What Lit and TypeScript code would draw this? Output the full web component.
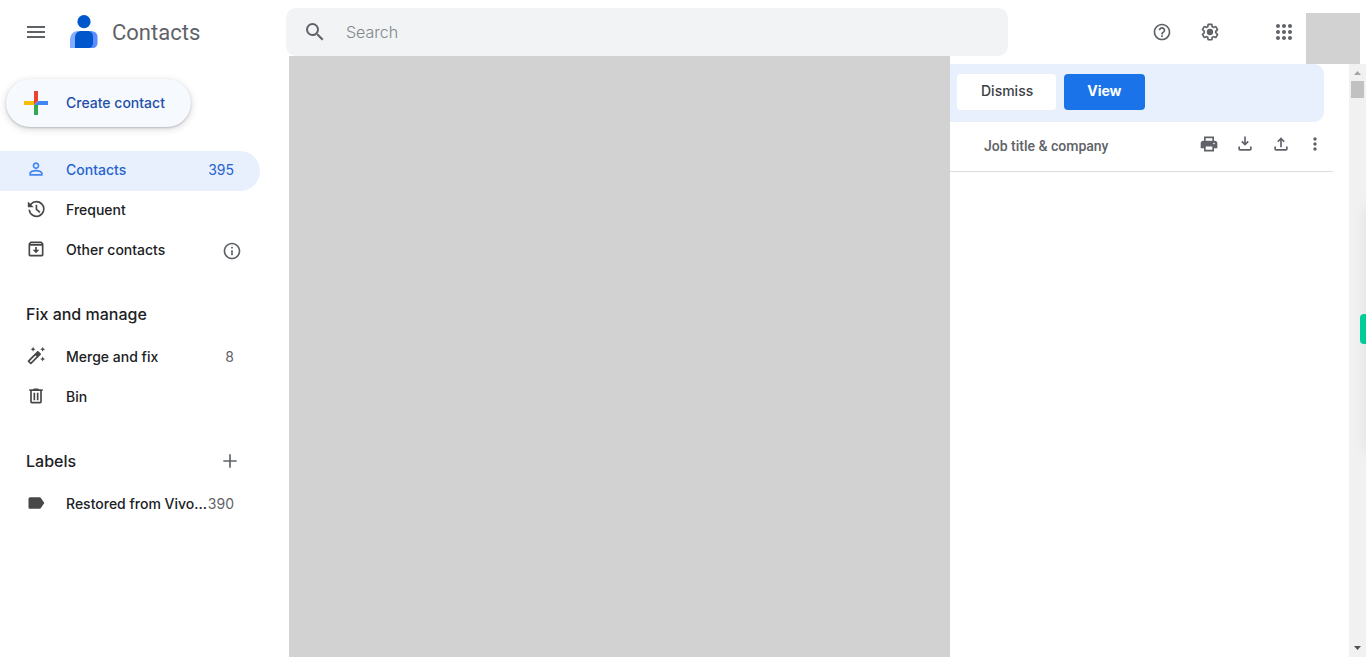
import { LitElement, html, css, svg } from "lit";
import { customElement, property } from "lit/decorators.js";
import { classMap } from "lit/directives/class-map.js";

const glyphs: Record<string, string> = {
  menu: "M3 18h18v-2H3v2zm0-5h18v-2H3v2zm0-7v2h18V6H3z",
  search:
    "M15.5 14h-.79l-.28-.27A6.47 6.47 0 0 0 16 9.5 6.5 6.5 0 1 0 9.5 16c1.61 0 3.09-.59 4.23-1.57l.27.28v.79l5 4.99L20.49 19l-4.99-5zm-6 0C7.01 14 5 11.99 5 9.5S7.01 5 9.5 5 14 7.01 14 9.5 11.99 14 9.5 14z",
  help: "M11 18h2v-2h-2v2zm1-16C6.48 2 2 6.48 2 12s4.48 10 10 10 10-4.48 10-10S17.52 2 12 2zm0 18c-4.41 0-8-3.59-8-8s3.59-8 8-8 8 3.59 8 8-3.59 8-8 8zm0-14c-2.21 0-4 1.79-4 4h2c0-1.1.9-2 2-2s2 .9 2 2c0 2-3 1.75-3 5h2c0-2.25 3-2.5 3-5 0-2.21-1.79-4-4-4z",
  apps: "M6 8c1.1 0 2-.9 2-2s-.9-2-2-2-2 .9-2 2 .9 2 2 2zm6 12c1.1 0 2-.9 2-2s-.9-2-2-2-2 .9-2 2 .9 2 2 2zm-6 0c1.1 0 2-.9 2-2s-.9-2-2-2-2 .9-2 2 .9 2 2 2zm0-6c1.1 0 2-.9 2-2s-.9-2-2-2-2 .9-2 2 .9 2 2 2zm6 0c1.1 0 2-.9 2-2s-.9-2-2-2-2 .9-2 2 .9 2 2 2zm4-8c0 1.1.9 2 2 2s2-.9 2-2-.9-2-2-2-2 .9-2 2zm-4 2c1.1 0 2-.9 2-2s-.9-2-2-2-2 .9-2 2 .9 2 2 2zm6 6c1.1 0 2-.9 2-2s-.9-2-2-2-2 .9-2 2 .9 2 2 2zm0 6c1.1 0 2-.9 2-2s-.9-2-2-2-2 .9-2 2 .9 2 2 2z",
  gear: "M13.85 22.25h-3.7c-.74 0-1.36-.54-1.45-1.27l-.27-1.89c-.27-.14-.53-.29-.79-.46l-1.8.72c-.7.26-1.47-.03-1.81-.65L2.2 15.53c-.35-.66-.2-1.44.36-1.88l1.53-1.19c-.01-.15-.02-.3-.02-.46 0-.15.01-.31.02-.46l-1.52-1.19c-.59-.45-.74-1.26-.37-1.88l1.85-3.19c.34-.62 1.11-.9 1.79-.63l1.81.73c.26-.17.52-.32.78-.46l.27-1.91c.09-.7.71-1.25 1.44-1.25h3.7c.74 0 1.36.54 1.45 1.27l.27 1.89c.27.14.53.29.79.46l1.8-.72c.71-.26 1.48.03 1.82.65l1.84 3.18c.36.66.2 1.44-.36 1.88l-1.52 1.19c.01.15.02.3.02.46s-.01.31-.02.46l1.52 1.19c.56.45.72 1.23.37 1.86l-1.86 3.22c-.34.62-1.11.9-1.8.63l-1.8-.72c-.26.17-.52.32-.78.46l-.27 1.91c-.1.68-.72 1.22-1.46 1.22zm-3.23-2h2.76l.37-2.55.53-.22c.44-.18.88-.44 1.34-.78l.45-.34 2.38.96 1.38-2.4-2.03-1.58.07-.56c.03-.26.06-.51.06-.78s-.03-.53-.06-.78l-.07-.56 2.03-1.58-1.39-2.4-2.39.96-.45-.35c-.42-.32-.87-.58-1.33-.77l-.52-.22-.37-2.55h-2.76l-.37 2.55-.53.21c-.44.19-.88.44-1.34.79l-.45.33-2.38-.95-1.39 2.39 2.03 1.58-.07.56a7 7 0 0 0-.06.79c0 .26.02.53.06.78l.07.56-2.03 1.58 1.38 2.4 2.39-.96.45.35c.43.33.86.58 1.33.77l.53.22.38 2.55zM12 8.2a3.8 3.8 0 1 0 0 7.6 3.8 3.8 0 0 0 0-7.6z",
  person:
    "M12 6c1.1 0 2 .9 2 2s-.9 2-2 2-2-.9-2-2 .9-2 2-2m0 9c2.7 0 5.8 1.29 6 2v1H6v-.99c.2-.72 3.3-2.01 6-2.01m0-11C9.79 4 8 5.79 8 8s1.79 4 4 4 4-1.79 4-4-1.79-4-4-4zm0 9c-2.67 0-8 1.34-8 4v3h16v-3c0-2.66-5.33-4-8-4z",
  history:
    "M12.5 2.2A9.8 9.8 0 0 0 5 5.7L2.2 2.9V10h7.1L6.4 7.1a7.8 7.8 0 1 1-1.6 5.9h-2a9.8 9.8 0 1 0 9.7-10.8zM11.5 7v6l4.6 3.9 1.3-1.5-3.9-3.3V7z",
  archive:
    "M20.54 5.23l-1.39-1.68C18.88 3.21 18.47 3 18 3H6c-.47 0-.88.21-1.16.55L3.46 5.23C3.17 5.57 3 6.02 3 6.5V19c0 1.1.9 2 2 2h14c1.1 0 2-.9 2-2V6.5c0-.48-.17-.93-.46-1.27zM6.24 5h11.52l.83 1H5.42l.82-1zM5 19V8h14v11H5zm6-9.5V13H8l4 4 4-4h-3V9.500z",
  info: "M11 7h2v2h-2zm0 4h2v6h-2zm1-9C6.480 2 2 6.480 2 12s4.480 10 10 10 10-4.480 10-10S17.520 2 12 2zm0 18c-4.410 0-8-3.590-8-8s3.590-8 8-8 8 3.590 8 8-3.590 8-8 8z",
  wand: "M20 7l.94-2.060L23 4l-2.060-.940L20 1l-.940 2.060L17 4l2.060.940zM8.500 7l.940-2.060L11.500 4l-2.060-.940L8.500 1l-.940 2.060L5.500 4l2.060.940zM20 12.500l-.940 2.060-2.060.940 2.060.940.940 2.060.940-2.060L23 15.500l-2.060-.940zM17.710 9.120l-2.830-2.830C14.680 6.100 14.430 6 14.170 6c-.260 0-.510.100-.710.290L2.290 17.460a1 1 0 0 0 0 1.410l2.830 2.830c.200.200.450.300.710.300s.510-.100.710-.290l11.170-11.170c.390-.390.390-1.030 0-1.420zM5.830 19.590l-1.410-1.410 6.870-6.870 1.410 1.410-6.870 6.870z",
  bin: "M15 4V3H9v1H4v2h1v13c0 1.100.9 2 2 2h10c1.100 0 2-.9 2-2V6h1V4h-5zm2 15H7V6h10v13zM9 8h2v9H9zm4 0h2v9h-2z",
  plus: "M20 13h-7v7h-2v-7H4v-2h7V4h2v7h7v2z",
  label:
    "M17.630 5.840C17.270 5.330 16.670 5 16 5L5 5.010C3.900 5.010 3 5.900 3 7v10c0 1.100.9 1.990 2 1.990L16 19c.670 0 1.270-.330 1.630-.840L22 12l-4.370-6.160z",
  print:
    "M19 8h-1V3H6v5H5c-1.660 0-3 1.340-3 3v6h4v4h12v-4h4v-6c0-1.660-1.340-3-3-3zM8 5h8v3H8V5zm8 14H8v-4h8v4zm2-6.500c-.550 0-1-.450-1-1s.450-1 1-1 1 .450 1 1-.450 1-1 1z",
  download:
    "M16.590 9.590L15.170 8.170 13 10.340V3h-2v7.340L8.830 8.170 7.410 9.590 12 14.170zM4 15v3c0 1.100.9 2 2 2h12c1.100 0 2-.9 2-2v-3h-2v3H6v-3z",
  upload:
    "M7.410 8.590L8.830 10 11 7.830V16h2V7.830L15.170 10l1.420-1.410L12 4zM4 15v3c0 1.100.9 2 2 2h12c1.100 0 2-.9 2-2v-3h-2v3H6v-3z",
  more: "M12 8c1.100 0 2-.9 2-2s-.9-2-2-2-2 .9-2 2 .9 2 2 2zm0 2c-1.100 0-2 .9-2 2s.9 2 2 2 2-.9 2-2-.9-2-2-2zm0 6c-1.100 0-2 .9-2 2s.9 2 2 2 2-.9 2-2-.9-2-2-2z",
};

@customElement("c-icon")
class CIcon extends LitElement {
  @property() name = "menu";
  static styles = css`
    :host { display: block; width: 20px; height: 20px; flex: none; }
    :host([large]) { width: 24px; height: 24px; }
    .glyph { display: block; width: 100%; height: 100%; fill: currentColor; }
  `;
  render() {
    return html`<svg class="glyph" viewBox="0 0 24 24" aria-hidden="true">
      ${svg`<path d=${glyphs[this.name]}></path>`}
    </svg>`;
  }
}

interface NavItem {
  icon: string;
  text: string;
  count?: number;
  active?: boolean;
  info?: boolean;
}

const main: NavItem[] = [
  { icon: "person", text: "Contacts", count: 395, active: true },
  { icon: "history", text: "Frequent" },
  { icon: "archive", text: "Other contacts", info: true },
];
const manage: NavItem[] = [
  { icon: "wand", text: "Merge and fix", count: 8 },
  { icon: "bin", text: "Bin" },
];
const labels: NavItem[] = [{ icon: "label", text: "Restored from Vivo...", count: 390 }];

@customElement("app-root")
class AppRoot extends LitElement {
  static styles = css`
    :host {
      display: flex;
      flex-direction: column;
      position: relative;
      height: 100vh;
      overflow: hidden;
      background: #fff;
      color: #202124;
      font: 500 14px/20px Inter, Roboto, sans-serif;
    }
    * { box-sizing: border-box; }
    button { font: inherit; border: 0; margin: 0; padding: 0; background: none; color: inherit; cursor: pointer; }
    a { color: inherit; text-decoration: none; }

    .header { display: flex; height: 64px; flex: none; color: #5f6368; }
    .brand { display: flex; align-items: center; width: 286px; flex: none; padding-left: 24px; }
    .logo { display: flex; align-items: center; gap: 12px; margin-left: 20px; font: 400 22px/28px Roboto, sans-serif; }
    .logo span { padding-top: 2px; }
    .mark { display: block; width: 32px; height: 36px; }
    .search {
      display: flex; align-items: center; flex: 0 1 722px; height: 48px; margin-top: 8px;
      padding-left: 17px; gap: 19px; border-radius: 10px; background: #f1f3f4;
    }
    .field { flex: 1; min-width: 0; border: 0; outline: 0; padding: 0; background: none; font: 300 16px/24px Inter, sans-serif; color: #202124; }
    .field::placeholder { color: #80868b; opacity: 1; }
    .tools { display: flex; align-items: center; margin-left: auto; }
    .tool { margin-right: 28px; }
    .tool.wide { margin-right: 52px; }
    .tool.last { margin-right: 10px; }
    .avatar { width: 54px; height: 51px; margin: 13px 6px 0 0; align-self: flex-start; background: #d2d2d2; }

    .body { display: flex; flex: 1; min-height: 0; }
    .side { width: 289px; flex: none; padding-top: 15px; }
    .create {
      display: flex; align-items: center; gap: 18px; height: 48px; margin: 0 0 24px 6px; padding: 0 26px 0 18px;
      border-radius: 24px; background: #f6f9fe; color: #1f4fa8;
      box-shadow: 0 1px 2px rgba(60, 64, 67, 0.25), 0 2px 6px 1px rgba(60, 64, 67, 0.16);
    }
    .cross { display: block; width: 24px; height: 24px; }
    .row { display: flex; align-items: center; height: 40px; width: 260px; padding: 0 26px 2px; border-radius: 0 20px 20px 0; }
    .row.active { background: #e8f0fe; color: #2563cf; }
    .row c-icon { margin: 0 20px 2px 0; color: #474747; }
    .row.active c-icon { color: #4285f4; }
    .text { flex: 1; white-space: nowrap; }
    .count { font-weight: 400; color: #5f6368; }
    .active .count { color: inherit; }
    .row .info { margin: 2px -8px 0 0; color: #5f6368; }
    .title { display: flex; align-items: center; justify-content: space-between; height: 67px; margin: 0; padding: 18px 49px 0 26px; font: 500 16px/24px Inter, sans-serif; }
    .title button { color: #5f6368; }

    .cover { flex: 0 1 661px; margin-top: -8px; background: #d2d2d2; }
    .panel { flex: 1 0 399px; }
    .banner { display: flex; gap: 8px; height: 58px; margin-right: 25px; padding: 10px 7px; border-radius: 0 10px 10px 0; background: #e8f0fe; }
    .btn { height: 36px; padding: 0 23px 2px 24px; border-radius: 4px; background: #fff; color: #3c4043; }
    .btn.primary { padding: 0 23px 2px; background: #1a73e8; color: #fff; font-weight: 700; }
    .cols { display: flex; align-items: center; height: 50px; margin-right: 16px; padding: 0 8px 6px 34px; border-bottom: 1px solid #dadce0; color: #5f6368; }
    .col { flex: 1; padding-top: 5px; font: 500 14px/20px Roboto, sans-serif; }
    .actions { display: flex; gap: 16px; }
    .actions .more { margin-left: -2px; }

    .scroll { display: flex; flex-direction: column; width: 17px; flex: none; background: #f1f1f1; }
    .arrow { display: block; width: 17px; height: 17px; fill: #a3a3a3; }
    .arrow.down { margin-top: auto; fill: #505050; }
    .thumb { width: 13px; height: 17px; margin-left: 2px; background: #c1c1c1; }

    .tab { position: absolute; right: 0; top: 314px; width: 6px; height: 30px; border-radius: 4px 0 0 4px; background: #00cc99; }
    .shade { position: absolute; right: -10px; top: 206px; width: 10px; height: 246px; box-shadow: 0 0 14px rgba(0, 0, 0, 0.08); }
  `;

  private row(item: NavItem) {
    return html`<a href="#" class=${classMap({ row: true, active: !!item.active })}>
      <c-icon name=${item.icon}></c-icon>
      <span class="text">${item.text}</span>
      ${item.count ? html`<span class="count">${item.count}</span>` : ""}
      ${item.info ? html`<c-icon class="info" name="info"></c-icon>` : ""}
    </a>`;
  }

  render() {
    return html`
      <header class="header">
        <div class="brand">
          <button aria-label="Main menu"><c-icon large name="menu"></c-icon></button>
          <a class="logo" href="#">
            <svg class="mark" viewBox="0 0 32 36" aria-hidden="true">
              <circle cx="16" cy="7.700" r="6.600" fill="#0057cc" />
              <path d="M2 34V26c0-5 3-9 8-9h10v17z" fill="#84adff" />
              <path d="M13 17h9c4.500 0 7.500 2 7.500 6v6c0 3-2 5-5 5H13z" fill="#5c8dff" />
              <path d="M7 34V24c0-4.500 2.500-7 7-7h5c4 0 6 2.500 6 6v6c0 3-2 5-5 5z" fill="#0057cc" />
            </svg>
            <span>Contacts</span>
          </a>
        </div>
        <div class="search" role="search">
          <button aria-label="Search"><c-icon large name="search"></c-icon></button>
          <input class="field" type="text" placeholder="Search" aria-label="Search" />
        </div>
        <div class="tools">
          <button class="tool" aria-label="Help"><c-icon name="help"></c-icon></button>
          <button class="tool wide" aria-label="Settings"><c-icon name="gear"></c-icon></button>
          <button class="tool last" aria-label="Apps"><c-icon large name="apps"></c-icon></button>
          <div class="avatar"></div>
        </div>
      </header>
      <div class="body">
        <nav class="side">
          <button class="create">
            <svg class="cross" viewBox="0 0 24 24" aria-hidden="true">
              <path d="M10 0h4v10l-4 4z" fill="#ea4335" />
              <path d="M0 10h10v4H0z" fill="#fbbc04" />
              <path d="M10 14h4v10h-4z" fill="#34a853" />
              <path d="M14 10h10v4H10z" fill="#4285f4" />
            </svg>
            <span>Create contact</span>
          </button>
          ${main.map((i) => this.row(i))}
          <h2 class="title">Fix and manage</h2>
          ${manage.map((i) => this.row(i))}
          <h2 class="title">Labels<button aria-label="Create label"><c-icon name="plus"></c-icon></button></h2>
          ${labels.map((i) => this.row(i))}
        </nav>
        <div class="cover"></div>
        <main class="panel">
          <div class="banner">
            <button class="btn">Dismiss</button>
            <button class="btn primary">View</button>
          </div>
          <div class="cols">
            <span class="col">Job title &amp; company</span>
            <div class="actions">
              <button aria-label="Print"><c-icon name="print"></c-icon></button>
              <button aria-label="Export"><c-icon name="download"></c-icon></button>
              <button aria-label="Import"><c-icon name="upload"></c-icon></button>
              <button class="more" aria-label="List settings"><c-icon name="more"></c-icon></button>
            </div>
          </div>
        </main>
        <div class="scroll">
          <svg class="arrow" viewBox="0 0 17 17" aria-hidden="true"><path d="M5 11h7L8.500 7z" /></svg>
          <div class="thumb"></div>
          <svg class="arrow down" viewBox="0 0 17 17" aria-hidden="true"><path d="M5 6h7l-3.500 4z" /></svg>
        </div>
      </div>
      <div class="shade"></div>
      <div class="tab"></div>
    `;
  }
}
